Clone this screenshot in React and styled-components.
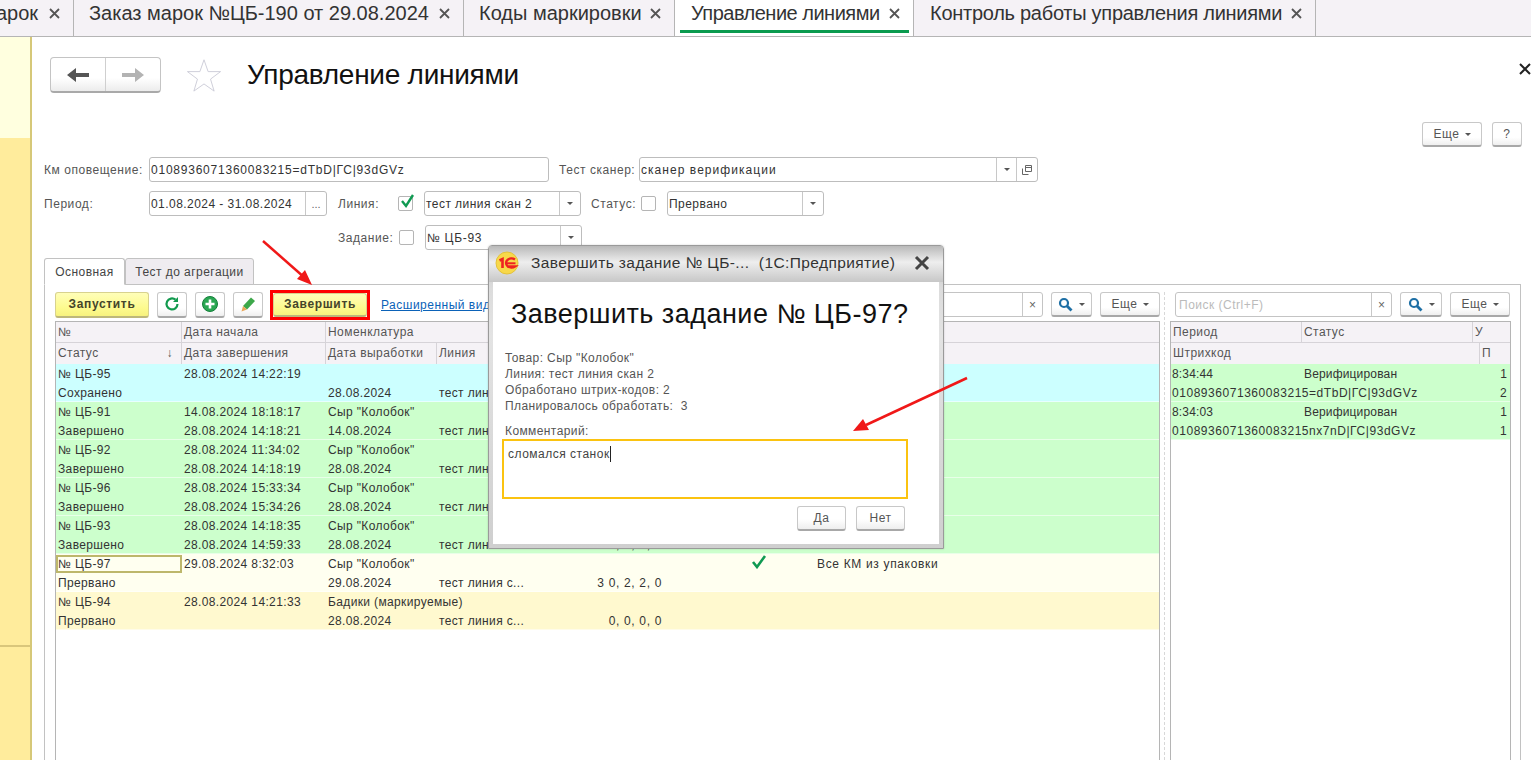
import React from "react";
import styled, { createGlobalStyle } from "styled-components";

const Global = createGlobalStyle`
  html, body { margin: 0; padding: 0; background: #fff; overflow: hidden; }
  body { font-family: "Liberation Sans", Arial, sans-serif; font-size: 12px; color: #333; }
  * { box-sizing: border-box; }
`;
const Page = styled.div`position: relative; width: 1531px; height: 760px; overflow: hidden; display: flex; flex-direction: column; background: #fff;`;
const TabBar = styled.div`height: 37px; flex: none; display: flex; background: #f5f2f6; border-bottom: 1px solid #b5b5b5;`;
const TopTab = styled.div`
  width: ${p => p.$w}px; flex: none; height: 36px; display: flex; align-items: center; justify-content: space-between;
  padding: 0 12px 10px ${p => p.$pl}px; border-right: 1px solid #b5b5b5; position: relative; white-space: nowrap;
  font-size: 20px; color: #333; overflow: hidden;
  ${p => p.$active && `background: #fff; &::after { content: ""; position: absolute; left: 5px; right: 4px; bottom: 3px; height: 3px; background: #0a9b4f; }`}
`;
const TabLabel = styled.span`margin-left: ${p => p.$ml || 0}px; letter-spacing: ${p => p.$ls || 0}px;`;
const TabClose = styled.svg`width: 13px; height: 13px; flex: none; stroke: #555; stroke-width: 1.8; fill: none;`;
const Body = styled.div`flex: 1; display: flex; min-height: 0;`;
const Side = styled.aside`width: 32px; flex: none; display: flex; flex-direction: column; border-right: 2px solid #d6c878;`;
const SideBlock = styled.div`flex: none; height: ${p => p.$h}px; background: ${p => p.$bg}; ${p => p.$line && "border-top: 2px solid #d9c67b;"}`;
const Main = styled.main`flex: 1; min-width: 0; display: flex; flex-direction: column; padding: 0 20px 0 12px; position: relative;`;
const TitleRow = styled.div`height: 56px; margin-top: 10px; display: flex; align-items: center; padding-left: 6px;`;
const NavGroup = styled.div`
  width: 111px; height: 36px; display: flex; border: 1px solid #c4c4c4; border-bottom: 2px solid #a9a9a9; border-radius: 4px;
  background: linear-gradient(#ffffff 60%, #ececec);
`;
const NavBtn = styled.div`flex: 1; display: flex; align-items: center; justify-content: center; ${p => p.$sep && "border-right: 1px solid #cfcfcf;"}`;
const StarIcon = styled.svg`width: 36px; height: 34px; margin-left: 25px; fill: #fff; stroke: #c9c9d6; stroke-width: 1;`;
const Title = styled.h1`margin: 0 0 0 25px; font-weight: 400; font-size: 28px; color: #111; letter-spacing: -.26px;`;
const TopActions = styled.div`height: 27px; margin-top: 19px; display: flex; justify-content: flex-end; gap: 10px; margin-right: -11px;`;
const Btn = styled.div`
  height: ${p => p.$h || 25}px; width: ${p => p.$w}px; flex: none; display: flex; align-items: center; justify-content: center; gap: ${p => p.$gap ?? 5}px;
  border: 1px solid #c8c8c8; border-bottom: 2px solid #a8a8a8; border-radius: 3px; background: linear-gradient(#fff 65%, #efefef);
  font-size: 12px; color: #555; letter-spacing: .6px;
`;
const Caret = styled.span`width: 0; height: 0; border-left: 3px solid transparent; border-right: 3px solid transparent; border-top: 3px solid #555; flex: none;`;
const Form = styled.div`margin-top: 8px; display: flex; flex-direction: column; gap: 9px;`;
const FormRow = styled.div`display: flex; align-items: center; height: 25px;`;
const Label = styled.label`width: ${p => p.$w}px; flex: none; color: #555; font-size: 12px; letter-spacing: .55px; margin-left: ${p => p.$ml || 0}px; white-space: nowrap;`;
const Field = styled.div`
  width: ${p => p.$w}px; height: 25px; flex: none; display: flex; align-items: stretch; border: 1px solid #bdbdbd; border-radius: 3px; background: #fff;
  margin-left: ${p => p.$ml || 0}px;
`;
const FieldText = styled.div`flex: 1; min-width: 0; display: flex; align-items: center; padding-left: 1px; font-size: 12px; letter-spacing: ${p => p.$ls ?? .45}px; color: #333; white-space: nowrap; overflow: hidden;`;
const FieldBtn = styled.div`width: ${p => p.$w || 18}px; flex: none; display: flex; align-items: center; justify-content: center; border-left: 1px solid #c8c8c8; color: #666; font-size: 11px;`;
const Check = styled.div`width: 15px; height: 15px; flex: none; border: 1px solid #b5b5b5; border-radius: 2px; position: relative; margin-left: ${p => p.$ml || 0}px; background: #fff;`;
const CheckMark = styled.svg`position: absolute; left: 0; top: -4px; width: 18px; height: 18px; fill: none; stroke: #109a52; stroke-width: 2.4;`;
const TabPanel = styled.div`margin-top: 8px; flex: 1; min-height: 0; display: flex; flex-direction: column;`;
const PanelTabs = styled.div`display: flex; height: 27px; flex: none; position: relative; z-index: 1;`;
const PanelTab = styled.div`
  width: ${p => p.$w}px; height: 27px; display: flex; align-items: center; justify-content: center; font-size: 12px; letter-spacing: .45px; color: #444;
  border: 1px solid #c2c2c2; border-radius: 3px 3px 0 0;
  background: ${p => p.$active ? "#fff" : "#efecf0"};
  ${p => p.$active && "border-bottom-color: #fff;"}
`;
const PanelBody = styled.div`flex: 1; min-height: 0; border: 1px solid #c2c2c2; border-bottom: none; margin: -1px -10px 0 0; display: grid; grid-template-columns: 1115px 341px; padding: 7px 0 0 10px;`;
const Column = styled.div`display: flex; flex-direction: column; min-width: 0; position: relative;`;
const Toolbar = styled.div`height: 25px; flex: none; display: flex; align-items: center; gap: 8px; padding: 0 ${p => p.$pr || 0}px 0 ${p => p.$pl || 0}px;`;
const YellowBtn = styled.div`
  width: ${p => p.$w}px; height: ${p => p.$h || 26}px; flex: none; display: flex; align-items: center; justify-content: center; font-weight: 700; font-size: 12px; letter-spacing: .65px; color: #45452a;
  border: 1px solid #d8d28e; border-bottom: 2px solid #bdb77a; border-radius: 3px; background: linear-gradient(#fffeb8, #fdfa8e 65%, #f7f27e);
`;
const Marked = styled.div`flex: none; border: 3px solid #f00; display: flex; margin-left: -1px;`;
const IconBtn = styled(Btn)`width: 30px; height: 26px; flex: none;`;
const LinkText = styled.a`margin-left: 3px; color: #0b62b8; text-decoration: underline; font-size: 12px; letter-spacing: .5px; white-space: nowrap;`;
const Spacer = styled.div`flex: 1;`;
const Search = styled.div`width: ${p => p.$w}px; height: 25px; flex: none; display: flex; border: 1px solid #c4c4c4; border-radius: 3px; background: #fff;`;
const SearchText = styled.div`flex: 1; display: flex; align-items: center; padding-left: 3px; color: #bbb; font-size: 12px; letter-spacing: .5px;`;
const SearchClear = styled.div`width: 20px; flex: none; border-left: 1px solid #c8c8c8; display: flex; align-items: center; justify-content: center; color: #666; font-size: 12px;`;
const Table = styled.div`margin-top: 4px; flex: 1; border: 1px solid #b5b5b5; border-bottom: none; display: flex; flex-direction: column; width: ${p => p.$w}px; min-height: 0; background: #fff;`;
const Splitter = styled.div`position: absolute; right: 5px; top: 0; bottom: 0; border-right: 1px dashed #d8d8d8;`;
const HeadRow = styled.div`height: 21px; flex: none; display: flex; background: #f5f2f6; border-bottom: 1px solid #d6d3d8; ${p => p.$last && "border-bottom: none;"}`;
const HeadCell = styled.div`
  ${p => p.$w ? `width: ${p.$w}px; flex: none;` : "flex: 1;"} display: flex; align-items: center; justify-content: space-between; padding: 0 ${p => p.$pr || 2}px ${p => p.$pb || 0}px 2px; font-size: 12px; letter-spacing: .45px; color: #555;
  border-right: ${p => p.$end ? "none" : "1px solid #d6d3d8"}; white-space: nowrap; overflow: hidden;
`;
const DataRow = styled.div`height: 38px; flex: none; background: ${p => p.$bg}; border-bottom: 1px solid rgba(255,255,255,.55); display: flex; flex-direction: column; color: #333;`;
const Line = styled.div`height: 19px; flex: none; display: flex; align-items: center; font-size: 12px; letter-spacing: ${p => p.$ls ?? .36}px; white-space: nowrap;`;
const Cell = styled.div`
  width: ${p => p.$w}px; flex: none; overflow: hidden; padding-left: ${p => p.$pl ?? 2}px; margin-left: ${p => p.$ml || 0}px; height: ${p => p.$focus ? "18px" : "auto"};
  ${p => p.$ls != null && `letter-spacing: ${p.$ls}px;`}
  ${p => p.$right && "text-align: right; padding-right: 0;"}
  ${p => p.$focus && "border: 2px solid #bdb76b; padding-left: 0; display: flex; align-items: center; background: #fffff0;"}
`;
const CellMark = styled.svg`width: 16px; height: 14px; flex: none; fill: none; stroke: #109a52; stroke-width: 2.6; margin-top: -4px;`;
const Dialog = styled.div`
  position: absolute; left: 488px; top: 245px; width: 456px; height: 304px; z-index: 5; border: 1px solid #9a9a9a; border-radius: 4px 4px 0 0; padding: 0 4px 4px;
  background: linear-gradient(#bdbdbd, #dcdcdc 14%, #e3e3e3 30%, #cfcfcf); box-shadow: 0 0 2px rgba(0,0,0,.2); display: flex; flex-direction: column;
`;
const DialogHead = styled.div`height: 36px; flex: none; display: flex; align-items: center; padding: 0 4px 2px 6px; background: linear-gradient(#b9b9b9, #eeeeee 45%, #c7c7c7); margin: 0 -4px;`;
const Logo = styled.svg`width: 24px; height: 24px; flex: none;`;
const DialogTitle = styled.div`margin-left: 12px; flex: 1; font-size: 15.5px; letter-spacing: .4px; color: #333; white-space: pre;`;
const DialogX = styled.svg`width: 16px; height: 16px; margin-right: 9px; stroke: #444; stroke-width: 3; fill: none;`;
const DialogBody = styled.div`flex: 1; background: #fff; padding: 0 10px; display: flex; flex-direction: column;`;
const Question = styled.div`margin: 15px 0 0 8px; height: 34px; font-size: 27px; line-height: 34px; letter-spacing: .48px; color: #111; white-space: nowrap;`;
const InfoLine = styled.div`height: 16px; line-height: 16px; margin-left: 2px; font-size: 12px; letter-spacing: .4px; color: #555; white-space: pre;`;
const Info = styled.div`margin-top: 19px;`;
const CommentLabel = styled(InfoLine)`margin-top: 9px;`;
const Comment = styled.div`margin: 0 0 0 -1px; height: 60px; width: 406px; border: 2px solid #fbc310; padding: 6px 4px; font-size: 12px; letter-spacing: .5px; color: #444; display: flex; align-items: flex-start;`;
const CaretBar = styled.span`display: inline-block; width: 1px; height: 16px; background: #222; margin-top: -1px;`;
const DialogActions = styled.div`margin-top: 7px; width: 402px; display: flex; justify-content: flex-end; gap: 10px;`;
const DialogBtn = styled(Btn)`width: 49px; height: 25px; background: linear-gradient(#fff 55%, #eee);`;
const Arrows = styled.svg`position: absolute; left: 0; top: 0; width: 1531px; height: 760px; z-index: 6; pointer-events: none;`;
const CloseMark = styled.svg`position: absolute; right: 0; top: 26px; width: 12px; height: 12px; z-index: 2; stroke: #222; stroke-width: 2; fill: none;`;

const X = () => <TabClose viewBox="0 0 13 13"><path d="M2 2l9 9M11 2l-9 9" /></TabClose>;
const Mag = () => (
  <svg width="15" height="15" viewBox="0 0 15 15" fill="none" stroke="#1d6fa5" strokeWidth="2.2"><circle cx="6" cy="6" r="4" /><path d="M9 9l4.5 4.500" strokeWidth="2.8" /></svg>
);
const SearchBox = ({ w, text }) => (
  <Search $w={w}><SearchText>{text}</SearchText><SearchClear>×</SearchClear></Search>
);

const rows = [
  ["#ccffff", "№ ЦБ-95", "28.08.2024 14:22:19", "", "Сохранено", "", "28.08.2024", "тест линия с..."],
  ["#ccffcc", "№ ЦБ-91", "14.08.2024 18:18:17", 'Сыр "Колобок"', "Завершено", "28.08.2024 14:18:21", "14.08.2024", "тест линия с..."],
  ["#ccffcc", "№ ЦБ-92", "28.08.2024 11:34:02", 'Сыр "Колобок"', "Завершено", "28.08.2024 14:18:19", "28.08.2024", "тест линия с..."],
  ["#ccffcc", "№ ЦБ-96", "28.08.2024 15:33:34", 'Сыр "Колобок"', "Завершено", "28.08.2024 15:34:26", "28.08.2024", "тест линия с..."],
  ["#ccffcc", "№ ЦБ-93", "28.08.2024 14:18:35", 'Сыр "Колобок"', "Завершено", "28.08.2024 14:59:33", "28.08.2024", "тест линия с...", "0, 0, 0, 0"],
  ["#fffff0", "№ ЦБ-97", "29.08.2024 8:32:03", 'Сыр "Колобок"', "Прервано", "", "29.08.2024", "тест линия с...", "3 0, 2, 2, 0", true],
  ["#fff9cf", "№ ЦБ-94", "28.08.2024 14:21:33", "Бадики (маркируемые)", "Прервано", "", "28.08.2024", "тест линия с...", "0, 0, 0, 0"],
];
const sideRows = [
  ["8:34:44", "Верифицирован", "1", "0108936071360083215=dTbD|ГС|93dGVz", "2"],
  ["8:34:03", "Верифицирован", "1", "0108936071360083215nx7nD|ГС|93dGVz", "1"],
];

export default function App() {
  return (
    <Page>
      <Global />
      <TabBar>
        <TopTab $w={74} $pl={0}><TabLabel $ml={-4}>арок</TabLabel><X /></TopTab>
        <TopTab $w={390} $pl={15}><TabLabel>Заказ марок №ЦБ-190 от 29.08.2024</TabLabel><X /></TopTab>
        <TopTab $w={211} $pl={15}><TabLabel>Коды маркировки</TabLabel><X /></TopTab>
        <TopTab $w={239} $pl={16} $active><TabLabel $ls={-.5}>Управление линиями</TabLabel><X /></TopTab>
        <TopTab $w={402} $pl={16}><TabLabel $ls={-.27}>Контроль работы управления линиями</TabLabel><X /></TopTab>
      </TabBar>
      <Body>
        <Side>
          <SideBlock $h={101} $bg="#ffffdf" />
          <SideBlock $h={507} $bg="#ffec9c" />
          <SideBlock $h={115} $bg="#ffec9c" $line />
        </Side>
        <Main>
          <CloseMark viewBox="0 0 12 12"><path d="M1 1l10 10M11 1L1 11" /></CloseMark>
          <TitleRow>
            <NavGroup>
              <NavBtn $sep>
                <svg width="22" height="16" viewBox="0 0 22 16" fill="#555"><path d="M0 8l9-7v5h13v4H9v5z" /></svg>
              </NavBtn>
              <NavBtn>
                <svg width="22" height="16" viewBox="0 0 22 16" fill="#b3b3b3"><path d="M22 8l-9-7v5H0v4h13v5z" /></svg>
              </NavBtn>
            </NavGroup>
            <StarIcon viewBox="0 0 38 38"><path d="M19 2l4.6 13.2h13.9L26.3 23.6l4 13.4L19 29l-11.300 8 4-13.400L.5 15.200h13.900z" /></StarIcon>
            <Title>Управление линиями</Title>
          </TitleRow>
          <TopActions>
            <Btn $w={60} $h={25}>Еще <Caret /></Btn>
            <Btn $w={30} $h={25}>?</Btn>
          </TopActions>
          <Form>
            <FormRow>
              <Label $w={105}>Км оповещение:</Label>
              <Field $w={400}><FieldText $ls={.77}>0108936071360083215=dTbD|ГС|93dGVz</FieldText></Field>
              <Label $w={80} $ml={10}>Тест сканер:</Label>
              <Field $w={399}>
                <FieldText $ls={1.05}>сканер верификации</FieldText>
                <FieldBtn $w={20}><Caret /></FieldBtn>
                <FieldBtn $w={21}>
                  <svg width="10" height="10" viewBox="0 0 10 10" fill="none" stroke="#666"><path d="M3.500.5h6v6h-6zM3.500 2.500h6M.5 3.500v6h6" /></svg>
                </FieldBtn>
              </Field>
            </FormRow>
            <FormRow>
              <Label $w={105}>Период:</Label>
              <Field $w={178}><FieldText>01.08.2024 - 31.08.2024</FieldText><FieldBtn $w={21}>...</FieldBtn></Field>
              <Label $w={60} $ml={11}>Линия:</Label>
              <Check><CheckMark viewBox="0 0 18 18"><path d="M3 8l4 5 7-11" /></CheckMark></Check>
              <Field $w={157} $ml={11}><FieldText>тест линия скан 2</FieldText><FieldBtn $w={21}><Caret /></FieldBtn></Field>
              <Label $w={50} $ml={10}>Статус:</Label>
              <Check />
              <Field $w={157} $ml={11}><FieldText>Прервано</FieldText><FieldBtn $w={21}><Caret /></FieldBtn></Field>
            </FormRow>
            <FormRow>
              <Label $w={61} $ml={294}>Задание:</Label>
              <Check />
              <Field $w={157} $ml={11}><FieldText $ls={.7}>№ ЦБ-93</FieldText><FieldBtn $w={21}><Caret /></FieldBtn></Field>
            </FormRow>
          </Form>
          <TabPanel>
            <PanelTabs>
              <PanelTab $w={81} $active>Основная</PanelTab>
              <PanelTab $w={129}>Тест до агрегации</PanelTab>
            </PanelTabs>
            <PanelBody>
              <Column>
                <Toolbar $pr={10}>
                  <YellowBtn $w={94}>Запустить</YellowBtn>
                  <IconBtn>
                    <svg width="16" height="16" viewBox="0 0 16 16" fill="none" stroke="#129a4e" strokeWidth="2.200"><path d="M13.500 8a5.500 5.500 0 1 1-2-4.300" /><path d="M14 1v5H9z" fill="#129a4e" strokeWidth="0" /></svg>
                  </IconBtn>
                  <IconBtn>
                    <svg width="18" height="18" viewBox="0 0 18 18"><circle cx="9" cy="9" r="7.500" fill="#2aa752" stroke="#147f3a" /><path d="M9 4.500v9M4.500 9h9" stroke="#fff" strokeWidth="2.600" /></svg>
                  </IconBtn>
                  <IconBtn>
                    <svg width="18" height="18" viewBox="0 0 18 18"><path d="M4 11L12 2.500l4 3.500-8 8.500z" fill="#3da84a" /><path d="M4 11l4 3.500-5.500 2z" fill="#e9a75b" /></svg>
                  </IconBtn>
                  <Marked><YellowBtn $w={94} $h={24}>Завершить</YellowBtn></Marked>
                  <LinkText>Расширенный вид</LinkText>
                  <Spacer />
                  <SearchBox w={195} text="" />
                  <Btn $w={41} $gap={6}><Mag /><Caret /></Btn>
                  <Btn $w={60}>Еще <Caret /></Btn>
                </Toolbar>
                <Table $w={1105}>
                  <HeadRow>
                    <HeadCell $w={126}>№</HeadCell>
                    <HeadCell $w={144}>Дата начала</HeadCell>
                    <HeadCell $end>Номенклатура</HeadCell>
                  </HeadRow>
                  <HeadRow $last>
                    <HeadCell $w={126} $pr={8} $pb={2}>Статус <span>↓</span></HeadCell>
                    <HeadCell $w={144} $pb={2}>Дата завершения</HeadCell>
                    <HeadCell $w={111} $pb={2}>Дата выработки</HeadCell>
                    <HeadCell $end $pb={2}>Линия</HeadCell>
                  </HeadRow>
                  {rows.map(r => (
                    <DataRow key={r[1]} $bg={r[0]}>
                      <Line>
                        <Cell $w={126} $focus={r[9]}>{r[1]}</Cell>
                        <Cell $w={144}>{r[2]}</Cell>
                        <Cell $w={425}>{r[3]}</Cell>
                        {r[9] && <CellMark viewBox="0 0 16 14"><path d="M2 7l4 5 8-11" /></CellMark>}
                        {r[9] && <Cell $w={200} $ml={48} $ls={.66}>Все КМ из упаковки</Cell>}
                      </Line>
                      <Line>
                        <Cell $w={126}>{r[4]}</Cell>
                        <Cell $w={144}>{r[5]}</Cell>
                        <Cell $w={111}>{r[6]}</Cell>
                        <Cell $w={110}>{r[7]}</Cell>
                        <Cell $w={115} $right $ls={.66}>{r[8]}</Cell>
                      </Line>
                    </DataRow>
                  ))}
                </Table>
                <Splitter />
              </Column>
              <Column>
                <Toolbar $pl={5}>
                  <SearchBox w={217} text="Поиск (Ctrl+F)" />
                  <Btn $w={42} $gap={6}><Mag /><Caret /></Btn>
                  <Btn $w={60}>Еще <Caret /></Btn>
                </Toolbar>
                <Table $w={341}>
                  <HeadRow>
                    <HeadCell $w={131}>Период</HeadCell>
                    <HeadCell $w={171}>Статус</HeadCell>
                    <HeadCell $end>У</HeadCell>
                  </HeadRow>
                  <HeadRow $last>
                    <HeadCell $w={309} $pb={2}>Штрихкод</HeadCell>
                    <HeadCell $end $pb={2}>П</HeadCell>
                  </HeadRow>
                  {sideRows.map(r => (
                    <DataRow key={r[0]} $bg="#ccffcc">
                      <Line $ls={.16}>
                        <Cell $w={131} $pl={1}>{r[0]}</Cell>
                        <Cell $w={196}>{r[1]}</Cell>
                        <Cell $w={9} $right>{r[2]}</Cell>
                      </Line>
                      <Line $ls={.54}>
                        <Cell $w={327} $pl={1}>{r[3]}</Cell>
                        <Cell $w={9} $right>{r[4]}</Cell>
                      </Line>
                    </DataRow>
                  ))}
                </Table>
              </Column>
            </PanelBody>
          </TabPanel>
        </Main>
      </Body>
      <Dialog>
        <DialogHead>
          <Logo viewBox="0 0 24 24">
            <circle cx="12" cy="12" r="11" fill="#f8d84a" stroke="#e3c23a" />
            <path d="M4.500 9.500l3-1.500v9" fill="none" stroke="#e22" strokeWidth="2.600" />
            <path d="M20 8.500a5.500 4.500 0 1 0 0 7h-8" fill="none" stroke="#e22" strokeWidth="2.400" />
            <path d="M11.500 12.300h9" stroke="#e22" strokeWidth="2" />
          </Logo>
          <DialogTitle>Завершить задание № ЦБ-...  (1С:Предприятие)</DialogTitle>
          <DialogX viewBox="0 0 16 16"><path d="M2 2l12 12M14 2L2 14" /></DialogX>
        </DialogHead>
        <DialogBody>
          <Question>Завершить задание № ЦБ-97?</Question>
          <Info>
            <InfoLine>Товар: Сыр "Колобок"</InfoLine>
            <InfoLine>Линия: тест линия скан 2</InfoLine>
            <InfoLine>Обработано штрих-кодов: 2</InfoLine>
            <InfoLine>Планировалось обработать:  3</InfoLine>
          </Info>
          <CommentLabel>Комментарий:</CommentLabel>
          <Comment><span>сломался станок</span><CaretBar /></Comment>
          <DialogActions>
            <DialogBtn>Да</DialogBtn>
            <DialogBtn>Нет</DialogBtn>
          </DialogActions>
        </DialogBody>
      </Dialog>
      <Arrows viewBox="0 0 1531 760">
        <path d="M263 241L305 278" stroke="#f01818" strokeWidth="2.500" />
        <path d="M312 285l-15-6 8-9z" fill="#f01818" />
        <path d="M967 378L866 425" stroke="#f01818" strokeWidth="2.500" />
        <path d="M853 431l10-12 6 11z" fill="#f01818" />
      </Arrows>
    </Page>
  );
}
